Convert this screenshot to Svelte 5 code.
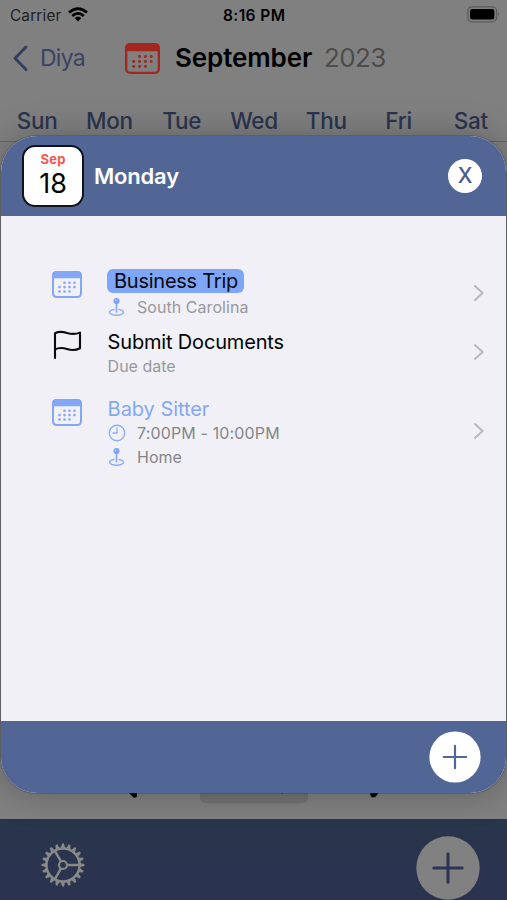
<script>
  const days = ['Sun', 'Mon', 'Tue', 'Wed', 'Thu', 'Fri', 'Sat'];
  const dots = [
    [12.5, 11.8], [17.5, 11.8], [22.5, 11.8],
    [7.5, 16.1], [12.5, 16.1], [17.5, 16.1], [22.5, 16.1],
    [7.5, 20.5], [12.5, 20.5], [17.5, 20.5]
  ];
  const teeth = Array.from({ length: 20 }, (_, i) => i * 18);
</script>

{#snippet calendar(w, h)}
  <svg width={w} height={h} viewBox="0 0 30 27" preserveAspectRatio="none">
    <rect x="1" y="1" width="28" height="25" rx="3.4" fill="none" stroke="currentColor" stroke-width="2" />
    <path d="M.2 7.2V4Q.2.2 4 .2H26Q29.8.2 29.8 4V7.2Z" fill="currentColor" />
    {#each dots as [x, y]}
      <circle cx={x} cy={y} r="1.3" fill="currentColor" />
    {/each}
  </svg>
{/snippet}

{#snippet pin()}
  <svg width="17" height="20" viewBox="0 0 17 20">
    <ellipse cx="8.5" cy="15.3" rx="7" ry="3" fill="none" stroke="#8eaff5" stroke-width="1.5" />
    <path d="M8.5 6V14.8" stroke="#f1f0f6" stroke-width="4" />
    <path d="M8.5 6V15" stroke="#86a8f2" stroke-width="1.6" stroke-linecap="round" />
    <circle cx="8.5" cy="4" r="3.1" fill="#7fa4f5" />
    <circle cx="7.6" cy="3.2" r=".8" fill="#c5d5fb" />
  </svg>
{/snippet}

{#snippet chevron()}
  <svg class="chev" width="12" height="18" viewBox="0 0 12 18">
    <path d="M2 2L9.6 9L2 16" fill="none" stroke="#b9b9be" stroke-width="2.1" stroke-linecap="round" stroke-linejoin="round" />
  </svg>
{/snippet}

<div class="screen">
  <div class="status">
    <span class="carrier">Carrier</span>
    <svg class="wifi" width="20" height="15" viewBox="0 0 20 15">
      <g fill="none" stroke="#000" stroke-width="2.7">
        <path d="M1 5.5Q10-2.4 19 5.5" />
        <path d="M4.2 9Q10 3.9 15.8 9" />
      </g>
      <path d="M6.7 11Q10 8 13.3 11L10 14.5Z" />
    </svg>
    <span class="time">8:16 PM</span>
    <svg class="battery" width="34" height="17" viewBox="0 0 34 17">
      <rect x=".8" y=".8" width="28.8" height="15" rx="4.3" fill="none" stroke="#5c5c5c" stroke-width="1.3" />
      <rect x="3" y="3" width="24.4" height="10.6" rx="2.4" />
      <path d="M31.2 6Q33 8.3 31.2 10.6Z" fill="#5c5c5c" />
    </svg>
  </div>

  <div class="nav">
    <svg class="back" width="17" height="27" viewBox="0 0 17 27">
      <path d="M14 2L3 13.3L14 24.6" fill="none" stroke="#323c5e" stroke-width="2.8" stroke-linecap="round" stroke-linejoin="round" />
    </svg>
    <span class="diya">Diya</span>
    <span class="navcal">{@render calendar(35, 31)}</span>
    <span class="month">September</span>
    <span class="year">2023</span>
  </div>

  <div class="days">
    {#each days as d}<span>{d}</span>{/each}
  </div>

  <div class="month-grid">
    <svg width="507" height="40" viewBox="0 0 507 40">
      <path d="M200 0H308V5Q308 11.5 300 11.5H208Q200 11.5 200 5Z" fill="#727272" />
      <path d="M128 0H137V4.5Q136 6 133.5 5.5Z" />
      <path d="M370 0H379Q376 5.5 373 5.5Q370 5 370 0Z" />
      <path d="M279 0H284L282.5 1.8Z" fill="#222" />
    </svg>
  </div>

  <div class="tabbar">
    <svg class="gear" width="44" height="44" viewBox="-22 -22 44 44">
      <g stroke="#868988" fill="none">
        <circle r="16.6" stroke-width="2.5" />
        <circle r="4" stroke-width="2.2" />
        <path d="M4.5 0H16.5M-2.2-3.9L-8.3-14.3M-2.2 3.9L-8.3 14.3" stroke-width="2.5" />
      </g>
      {#each teeth as a}
        <path d="M17-2.1L21.4-1V1L17 2.1Z" fill="#868988" transform="rotate({a})" />
      {/each}
    </svg>
    <svg class="plus" width="64" height="64" viewBox="0 0 64 64">
      <circle cx="32" cy="32" r="31.7" fill="#808180" />
      <path d="M32 17.8V46.2M17.8 32H46.2" stroke="#2b3450" stroke-width="3" stroke-linecap="round" />
    </svg>
  </div>

  <div class="modal">
    <header>
      <div class="date"><span class="sep">Sep</span><span class="num">18</span></div>
      <span class="dayname">Monday</span>
      <span class="close">X</span>
    </header>

    <main>
      <div class="row trip">
        <span class="ico">{@render calendar(30, 27)}</span>
        <div class="info">
          <div class="title"><span class="chip"><span class="t1">Business Trip</span></span></div>
          <div class="sub">{@render pin()}<span class="s1">South Carolina</span></div>
        </div>
        {@render chevron()}
      </div>
      <div class="row docs">
        <span class="ico flag">
          <svg width="29" height="30" viewBox="0 0 29 30">
            <path d="M2 28V3.2Q7 .6 14 3Q21 5 27 2.6V18.3Q21 21.4 14 19Q7 16.8 2 19.4" fill="none" stroke="#0b0b0d" stroke-width="2.1" stroke-linecap="round" stroke-linejoin="round" />
          </svg>
        </span>
        <div class="info">
          <div class="title"><span class="t2">Submit Documents</span></div>
          <div class="sub"><span class="s2">Due date</span></div>
        </div>
        {@render chevron()}
      </div>
      <div class="row sitter">
        <span class="ico">{@render calendar(30, 27)}</span>
        <div class="info">
          <div class="title"><span class="t3">Baby Sitter</span></div>
          <div class="sub">
            <svg width="18" height="18" viewBox="0 0 18 18">
              <circle cx="9" cy="9" r="7.7" fill="none" stroke="#8eaff5" stroke-width="1.4" />
              <path d="M9 4V9H5" fill="none" stroke="#8eaff5" stroke-width="1.3" stroke-linecap="round" />
            </svg>
            <span class="s3">7:00PM - 10:00PM</span>
          </div>
          <div class="sub">{@render pin()}<span class="s4">Home</span></div>
        </div>
        {@render chevron()}
      </div>
    </main>

    <footer>
      <svg width="52" height="52" viewBox="0 0 52 52">
        <circle cx="26" cy="26" r="25.6" fill="#fff" />
        <path d="M26 14.8V37.2M14.8 26H37.2" stroke="#526696" stroke-width="2.2" stroke-linecap="round" />
      </svg>
    </footer>
  </div>
</div>

<style>
  :global(body) { margin: 0; }
  .screen {
    position: relative;
    width: 507px;
    height: 900px;
    overflow: hidden;
    display: flex;
    flex-direction: column;
    background: #808080;
    font-family: Inter, 'Liberation Sans', sans-serif;
    color: #000;
  }
  svg { display: block; flex: none; }
  span { white-space: nowrap; }

  .status { display: flex; height: 30px; align-items: center; padding: 0 6px 0 10px; }
  .carrier { width: 58px; font-size: 15.3px; color: #202020; letter-spacing: .2px; }
  .wifi { margin-top: -1px; }
  .time { margin-left: 135px; font-size: 15.5px; font-weight: 600; letter-spacing: .4px; flex: 1; }
  .battery { margin-top: -2px; }

  .nav { display: flex; height: 56px; align-items: center; padding-left: 12px; }
  .back { margin-right: 11px; }
  .diya { width: 85px; font-size: 23px; letter-spacing: -.75px; color: #3a4361; }
  .navcal { width: 50px; color: #a3261f; }
  .month { width: 149px; font-size: 26px; font-weight: 600; letter-spacing: -.1px; margin-top: -1px; }
  .year { font-size: 26px; letter-spacing: -.6px; color: #4c4c4c; margin-top: -1px; }

  .days { display: flex; height: 54px; padding-top: 16px; box-sizing: border-box; margin-left: 1px; }
  .days span { width: 72.3px; flex: none; text-align: center; font-size: 22.5px; line-height: 38px; font-weight: 500; letter-spacing: -.25px; color: #2b344f; }

  .month-grid {
    flex: 1;
    margin-top: 1px;
    border-top: 1px solid #666;
    display: flex;
    align-items: flex-end;
  }
  .month-grid svg { margin-bottom: -13px; }

  .tabbar {
    position: relative;
    height: 81px;
    flex: none;
    box-sizing: border-box;
    display: flex;
    justify-content: space-between;
    padding: 0 27px 0 41px;
    background: linear-gradient(#283649, #2a344e 40%, #2b3350);
  }
  .gear { margin-top: 24px; }
  .plus { margin-top: 17px; }

  .modal {
    position: absolute;
    left: 1px;
    top: 136px;
    width: 505px;
    height: 657px;
    border-radius: 36px;
    overflow: hidden;
    display: flex;
    flex-direction: column;
    background: #f1f0f6;
    box-shadow: 0 0 0 1px rgba(50, 55, 70, .3), 0 0 34px rgba(0, 0, 0, .27);
  }
  header { display: flex; height: 80px; flex: none; align-items: center; background: #526696; padding: 0 24px 0 21px; }
  .date {
    display: flex;
    flex-direction: column;
    align-items: center;
    width: 62px;
    height: 62px;
    box-sizing: border-box;
    border: 2px solid #10131c;
    border-radius: 13px;
    background: #fff;
    margin-right: 10px;
  }
  .sep { font-size: 13px; font-weight: 700; line-height: 16px; margin-top: 4px; color: #f85650; letter-spacing: .2px; }
  .num { font-size: 27px; line-height: 34px; }
  .dayname { flex: 1; font-size: 22px; font-weight: 600; letter-spacing: -.2px; color: #fff; margin-top: -1px; }
  .close { width: 34px; height: 34px; line-height: 34px; border-radius: 50%; background: #fff; color: #4b5d8d; text-align: center; font-size: 21px; font-weight: 500; }

  main { flex: 1; padding: 50px 21px 0 51px; }
  .row { display: flex; }
  .trip { height: 61px; }
  .docs { height: 65px; }
  .sitter { height: 90px; }
  .ico { width: 55px; flex: none; color: #83a7f5; padding-top: 5px; }
  .flag { padding: 3px 0 0 1px; width: 54px; }
  .sitter .ico { padding-top: 7px; }
  .info { flex: 1; }
  .title { height: 30px; display: flex; align-items: center; font-size: 20px; }
  .chip { height: 24px; display: flex; align-items: center; width: 137px; box-sizing: border-box; padding-left: 7px; border-radius: 6px; background: #7fa5f7; color: #06080f; }
  .t1 { letter-spacing: -.25px; }
  .t2 { margin-left: .6px; letter-spacing: -.17px; }
  .t3 { margin-left: .6px; letter-spacing: -.05px; color: #83a8f4; }
  .sub { height: 24px; display: flex; align-items: center; font-size: 16px; color: #98989c; }
  .sub svg { margin-left: 1px; }
  .trip .sub { margin-top: -1px; }
  .docs .sub { margin-top: -3px; }
  .s2 { margin-left: .6px; }
  .sitter .title { margin-top: 2px; }
  .sitter .sub { color: #858589; }
  .sitter .sub:nth-child(2) { margin-top: -3px; }
  .s1, .s4 { margin-left: 12px; }
  .s1 { letter-spacing: .05px; }
  .s3 { margin-left: 11px; letter-spacing: .15px; }
  .chev { margin-top: 18px; }
  .docs .chev { margin-top: 16px; }
  .sitter .chev { margin-top: 30px; }

  footer { display: flex; height: 72px; flex: none; justify-content: flex-end; align-items: center; background: #526696; padding-right: 25px; }
</style>
